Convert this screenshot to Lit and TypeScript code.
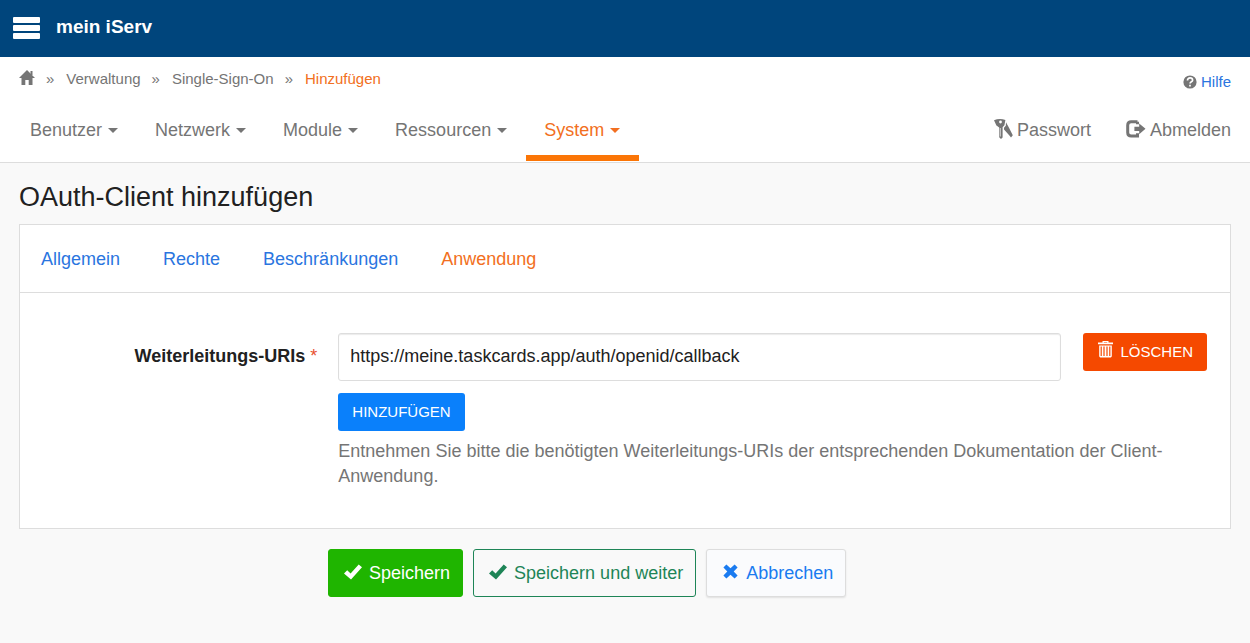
import { LitElement, html, css, svg } from "lit";
import { customElement, state } from "lit/decorators.js";

const icon = (name: string, viewBox: string, shape: unknown) =>
  html`<svg class="icon icon-${name}" viewBox=${viewBox} aria-hidden="true">${shape}</svg>`;

const icons = {
  home: icon("home", "0 0 16 15", svg`<path d="M8 0 16 8H13.5V15H9.7V10H6.3V15H2.5V8H0L8 0Z"/><path d="M11.5 1H13.5V5H11.5Z"/>`),
  help: icon("help", "0 0 14 14", svg`<circle cx="7" cy="7" r="6.6"/><path class="cut" d="M4.5 5.4C4.5 3.7 5.6 2.9 7 2.9S9.6 3.8 9.6 5.2C9.6 6.9 7.1 6.7 7.1 8.5"/><path class="cut" d="M7 9.7V11.4"/>`),
  keys: icon("keys", "0 0 19 20", svg`<path d="M0 1.2C3.5-.2 8-.2 11.4 1L10.4 6.3 8.6 8.3V18.6L7 20 5.2 18.3V8.4L2.4 6.4 0 1.2Z"/><path d="M12 3.2 15 8.7 18.8 16.3 17 18.6 15.4 16.6 10 10.6V8.8L11.8 6.7Z"/><circle class="hole" cx="6.5" cy="3" r="1.4"/><path class="slit" d="M6.3 9V17.5"/>`),
  logout: icon("logout", "0 0 20 18", svg`<path class="frame" d="M11.5 1.7H5.2Q1.7 1.7 1.7 5.2V12.4Q1.7 15.9 5.2 15.9H11.5V13.2M11.5 1.7V4.2"/><path d="M8.4 6.7H13.2V3.4L19.5 8.8 13.2 14.2V10.9H8.4Z"/>`),
  trash: icon("trash", "0 0 15 17", svg`<path d="M4.5 0H10.5V1.5H15V3.2H0V1.5H4.5ZM5.8 1V1.5H9.2V1Z" fill-rule="evenodd"/><path fill-rule="evenodd" d="M1.2 4.4H13.8V15Q13.8 16.4 12.6 16.4H2.4Q1.2 16.4 1.2 15ZM2.6 5.6V15H3.8V5.6ZM5.4 5.6V15H6.6V5.6ZM8.4 5.6V15H9.6V5.6ZM11.2 5.6V15H12.4V5.6Z"/>`),
  check: icon("check", "0 0 18 16", svg`<path d="M0 9.4 3.2 6.3 6.6 9.6 14.7.5 18 3.3 7 15.6Z"/>`),
  cross: icon("cross", "0 0 15 15", svg`<path d="M3.4.4 7.5 4.2 11.6.4 14.6 3.4 10.7 7.5 14.6 11.6 11.6 14.6 7.5 10.8 3.4 14.6.4 11.6 4.3 7.5.4 3.4Z"/>`),
};

@customElement("app-root")
export class AppRoot extends LitElement {
  @state() private uri = "https://meine.taskcards.app/auth/openid/callback";

  private menus = ["Benutzer", "Netzwerk", "Module", "Ressourcen", "System"];
  private tabs = ["Allgemein", "Rechte", "Beschränkungen", "Anwendung"];

  static styles = css`
    :host {
      display: block;
      min-height: 100vh;
      background: #f9f9f9;
      color: #212121;
      font: 18px/25px "Liberation Sans", Arial, sans-serif;
    }
    * { box-sizing: border-box; }
    a { color: inherit; text-decoration: none; }
    button, input { font: inherit; }
    button { cursor: pointer; }
    .icon { display: block; flex: none; margin-bottom: 3px; fill: currentColor; }
    .icon-home { width: 16px; height: 15px; }
    .icon-help { width: 14px; height: 14px; margin-bottom: 0; }
    .icon-keys { width: 19px; height: 20px; }
    .icon-logout { width: 20px; height: 18px; }
    .icon-trash { width: 15px; height: 17px; }
    .icon-check { width: 18px; height: 16px; }
    .icon-cross { width: 15px; height: 15px; }
    .cut { fill: none; stroke: #fff; stroke-width: 1.7; }
    .hole { fill: #fff; }
    .slit { fill: none; stroke: #fff; stroke-width: 0.7; }
    .frame { fill: none; stroke: currentColor; stroke-width: 3; }

    .topbar {
      display: flex;
      align-items: center;
      gap: 16px;
      height: 57px;
      padding: 0 13px 4px;
      background: #00457c;
      color: #fff;
    }
    .burger {
      display: grid;
      gap: 2px;
      width: 27px;
      margin-top: 3px;
      padding: 0;
      border: 0;
      background: none;
    }
    .burger span { height: 6px; border-radius: 1px; background: #fff; }
    .brand { font-size: 19px; font-weight: bold; }

    .head { background: #fff; border-bottom: 1px solid #ddd; color: #757575; }
    .crumbbar {
      display: flex;
      justify-content: space-between;
      padding: 6px 19px 0;
      font-size: 15px;
    }
    .crumbs {
      display: flex;
      align-items: center;
      margin: 0;
      padding: 0;
      list-style: none;
    }
    .crumbs li { display: flex; align-items: center; }
    .crumbs li + li::before { content: "»"; padding: 0 12px 0 11px; }
    .current { color: #f26f21; }
    .help { display: flex; align-items: center; gap: 4px; padding-top: 6px; }
    .help span { color: #2a75e0; }

    .nav { display: flex; justify-content: space-between; padding: 0 19px 1px 12px; }
    .menus, .account { display: flex; }
    .menu {
      display: flex;
      align-items: center;
      gap: 6px;
      padding: 24px 18px 12px;
      border: 0;
      border-bottom: 6px solid transparent;
      background: none;
      color: inherit;
    }
    .menu::after {
      content: "";
      margin-right: 1px;
      border: 5px solid transparent;
      border-top-color: currentColor;
      border-bottom: 0;
    }
    .menu.active { color: #f26f21; border-bottom-color: #fb7506; }
    .account { gap: 35px; }
    .account a { display: flex; align-items: center; gap: 4px; padding: 24px 0 18px; }

    .page { padding: 17px 19px; }
    h1 { margin: 0 0 10px; font-size: 27px; line-height: 34px; font-weight: normal; }
    .panel { background: #fff; border: 1px solid #ddd; }
    .tabs {
      display: flex;
      gap: 43px;
      padding: 22px 21px 20px;
      border-bottom: 1px solid #ddd;
      color: #2a75e0;
    }
    .form {
      display: grid;
      grid-template-columns: 6fr 19fr;
      gap: 21px;
      padding: 40px 23px 39px;
    }
    .label { padding-top: 11px; text-align: right; font-weight: bold; }
    .star { color: #e8502f; font-weight: normal; }
    .entry { display: flex; align-items: flex-start; gap: 22px; }
    .uri {
      flex: 1;
      min-width: 0;
      height: 48px;
      padding: 0 11px 2px;
      border: 1px solid #ddd;
      border-radius: 3px;
      background: #fff;
      box-shadow: inset 0 1px 1px rgba(0, 0, 0, 0.08);
      color: #212121;
    }
    .small {
      display: inline-flex;
      align-items: center;
      gap: 7px;
      height: 38px;
      padding: 0 14px 2px;
      border: 0;
      border-radius: 3px;
      color: #fff;
      font-size: 15px;
      text-transform: uppercase;
    }
    .delete { padding-left: 15px; background: #f54900; }
    .add { margin-top: 12px; background: #0a80fb; }
    .hint { margin: 8px 0 0; color: #757575; }

    .actions { display: flex; gap: 10px; padding: 20px 0 0 309px; }
    .action {
      display: flex;
      align-items: center;
      gap: 7px;
      height: 48px;
      padding: 0 12px 0 15px;
      border: 1px solid;
      border-radius: 3px;
      background: none;
    }
    .save { border-color: #1fb500; background: #1fb500; color: #fff; }
    .more { border-color: #1e8557; color: #1e8557; }
    .cancel {
      gap: 8px;
      padding-left: 16px;
      border-color: #ddd;
      background: #fafbfd;
      box-shadow: 0 1px 2px rgba(0, 0, 0, 0.1);
      color: #1a7bf0;
    }
  `;

  render() {
    return html`
      <header class="topbar">
        <button class="burger" aria-label="Menü"><span></span><span></span><span></span></button>
        <a class="brand" href="#">mein iServ</a>
      </header>
      <div class="head">
        <div class="crumbbar">
          <ol class="crumbs">
            <li><a href="#" aria-label="Start">${icons.home}</a></li>
            <li><a href="#">Verwaltung</a></li>
            <li><a href="#">Single-Sign-On</a></li>
            <li><a class="current" href="#">Hinzufügen</a></li>
          </ol>
          <a class="help" href="#">${icons.help}<span>Hilfe</span></a>
        </div>
        <nav class="nav">
          <div class="menus">
            ${this.menus.map((m) => html`<button class="menu ${m === "System" ? "active" : ""}">${m}</button>`)}
          </div>
          <div class="account">
            <a href="#">${icons.keys}Passwort</a>
            <a href="#">${icons.logout}Abmelden</a>
          </div>
        </nav>
      </div>
      <main class="page">
        <h1>OAuth-Client hinzufügen</h1>
        <section class="panel">
          <nav class="tabs">
            ${this.tabs.map((t) => html`<a class=${t === "Anwendung" ? "current" : ""} href="#">${t}</a>`)}
          </nav>
          <div class="form">
            <label class="label" for="uri">Weiterleitungs-URIs <span class="star">*</span></label>
            <div>
              <div class="entry">
                <input class="uri" id="uri" type="text" .value=${this.uri}
                  @input=${(e: Event) => (this.uri = (e.target as HTMLInputElement).value)} />
                <button class="small delete" @click=${() => (this.uri = "")}>${icons.trash}Löschen</button>
              </div>
              <button class="small add">Hinzufügen</button>
              <p class="hint">Entnehmen Sie bitte die benötigten Weiterleitungs-URIs der entsprechenden Dokumentation der Client-Anwendung.</p>
            </div>
          </div>
        </section>
        <div class="actions">
          <button class="action save">${icons.check}Speichern</button>
          <button class="action more">${icons.check}Speichern und weiter</button>
          <button class="action cancel">${icons.cross}Abbrechen</button>
        </div>
      </main>
    `;
  }
}
